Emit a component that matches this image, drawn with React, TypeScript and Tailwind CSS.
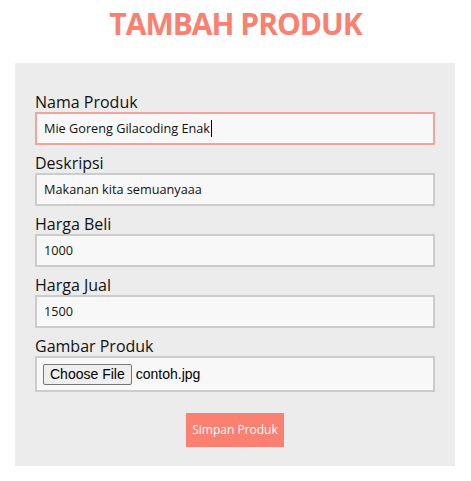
import React from "react";

const font = { fontFamily: '"Trebuchet MS", "Open Sans", "Noto Sans", sans-serif' };

function Field({ label, value, focused }: { label: string; value: string; focused?: boolean }) {
  return (
    <div className="mb-[9px]">
      <div className="text-[16px] leading-[19px] text-[#111]">{label}</div>
      <div
        className={
          "h-[33px] flex items-center px-[7px] bg-[#f8f8f8] border-2 text-[12.7px] text-[#111] " +
          (focused ? "border-[#f0a49b]" : "border-[#cccccc]")
        }
      >
        <span>{value}</span>
        {focused && <span className="inline-block w-px h-[17px] bg-black ml-px" />}
      </div>
    </div>
  );
}

export default function App() {
  return (
    <div className="w-[471px] h-[481px] bg-white" style={font}>
      <div className="h-[63px] flex justify-center pt-[2px]">
        <h1 className="text-[30px] leading-[44px] font-bold tracking-[-1px] text-[#fa8072]">TAMBAH PRODUK</h1>
      </div>
      <div className="ml-[15px] w-[440px] bg-[#ececec] pt-[30px] px-[20px] pb-[19px]">
        <Field label="Nama Produk" value="Mie Goreng Gilacoding Enak" focused />
        <Field label="Deskripsi" value="Makanan kita semuanyaaa" />
        <Field label="Harga Beli" value="1000" />
        <Field label="Harga Jual" value="1500" />
        <div>
          <div className="text-[16px] leading-[19px] text-[#111]">Gambar Produk</div>
          <div className="h-[36px] flex items-center px-[6px] bg-[#f8f8f8] border-2 border-[#cccccc]">
            <div
              className="h-[21px] px-[6px] flex items-center border border-[#767676] rounded-[2px] bg-[#efefef] text-[14px] text-black"
              style={{ fontFamily: '"Liberation Sans", Arial, sans-serif' }}
            >
              Choose File
            </div>
            <span
              className="ml-[4px] text-[14px] text-black"
              style={{ fontFamily: '"Liberation Sans", Arial, sans-serif' }}
            >
              contoh.jpg
            </span>
          </div>
        </div>
        <div className="flex justify-center mt-[21px]">
          <div className="w-[98px] h-[34px] bg-[#fa8072] text-white text-[12px] font-medium flex items-center justify-center">
            Simpan Produk
          </div>
        </div>
      </div>
    </div>
  );
}
